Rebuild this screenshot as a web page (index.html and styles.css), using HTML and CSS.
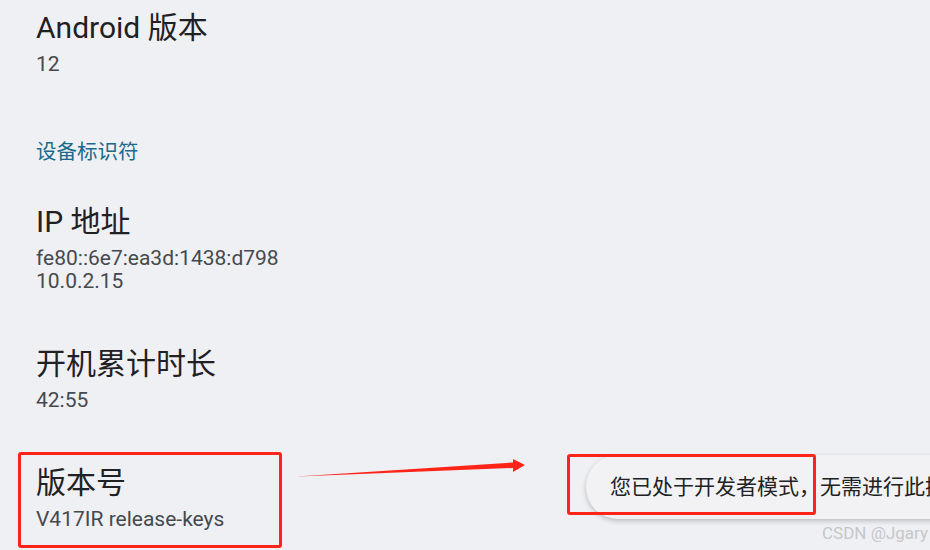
FILE: index.html
```html
<!DOCTYPE html>
<html lang="zh-CN">
<head>
  <meta charset="UTF-8">
  <title>关于设备</title>
  <link rel="stylesheet" href="styles.css">
</head>
<body>

<div class="prefs">
  <div class="pref first">
    <div class="pref-title">Android 版本</div>
    <div class="pref-summary">12</div>
  </div>

  <div class="category">设备标识符</div>

  <div class="pref">
    <div class="pref-title">IP 地址</div>
    <div class="pref-summary">fe80::6e7:ea3d:1438:d798<br>10.0.2.15</div>
  </div>

  <div class="pref">
    <div class="pref-title">开机累计时长</div>
    <div class="pref-summary">42:55</div>
  </div>

  <div class="pref">
    <div class="pref-title">版本号</div>
    <div class="pref-summary">V417IR release-keys</div>
  </div>
</div>

<!-- toast -->
<div class="toast">您已处于开发者模式，无需进行此操作</div>

<!-- annotations -->
<div class="mark mark-build"></div>
<div class="mark mark-toast"></div>
<svg class="arrow" width="240" height="30" viewBox="290 450 240 30">
  <polygon points="297,476.5 513,462.5 513,459 525,465 513,472 513,468" fill="#ff2418"/>
</svg>

<div class="watermark">CSDN @Jgary</div>

</body>
</html>
```

FILE: styles.css
```css
html, body {
  height: 100%;
}

body {
  margin: 0;
  background-color: #eff0f3;
  font-family: Roboto, "Noto Sans CJK SC", sans-serif;
  overflow: hidden;
  position: relative;
}

.prefs {
  padding-left: 36px;
}

.pref {
  padding-top: 29px;
  padding-bottom: 22px;
}

.pref.first {
  padding-top: 8px;
}

.pref-title {
  font-size: 30px;
  line-height: 40px;
  color: #1f2124;
}

.pref-summary {
  margin-top: 5px;
  font-size: 21px;
  line-height: 23px;
  color: #45494e;
}

.category {
  margin-top: 39px;
  margin-bottom: 6px;
  font-size: 20.5px;
  line-height: 30px;
  color: #1a6a8c;
}

/* toast en bas */
.toast {
  position: absolute;
  left: 586px;
  top: 455px;
  width: 600px;
  height: 64px;
  box-sizing: border-box;
  padding-left: 24px;
  border-radius: 32px;
  background-color: #f2f2f4;
  box-shadow: 0 2px 5px rgba(0, 0, 0, 0.22);
  font-size: 21px;
  line-height: 64px;
  color: #202124;
  white-space: nowrap;
}

/* cadres rouges */
.mark {
  position: absolute;
  border: 3px solid #ff2418;
  border-radius: 3px;
  box-sizing: border-box;
}

.mark-build {
  left: 18px;
  top: 452px;
  width: 264px;
  height: 96px;
}

.mark-toast {
  left: 567px;
  top: 454px;
  width: 249px;
  height: 61px;
}

.arrow {
  position: absolute;
  left: 290px;
  top: 450px;
}

.watermark {
  position: absolute;
  left: 822px;
  top: 523px;
  font-size: 17px;
  color: #c6c7ca;
  white-space: nowrap;
}
```
